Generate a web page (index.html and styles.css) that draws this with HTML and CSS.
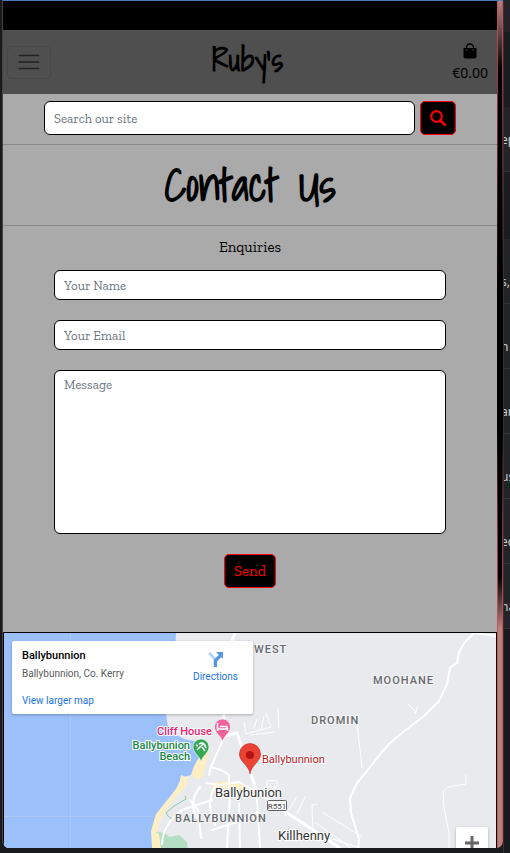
FILE: index.html
```html
<!DOCTYPE html>
<html lang="en">
<head>
<meta charset="utf-8">
<meta name="viewport" content="width=device-width, initial-scale=1">
<title>Ruby's - Contact Us</title>
<link rel="stylesheet" href="styles.css">
</head>
<body>
<div class="desktop">
  <div class="window">
    <div class="page">
      <div class="banner"></div>
      <header class="navbar">
        <button class="toggler" type="button" aria-label="Toggle navigation">
          <svg width="26" height="26" viewBox="0 0 30 30"><path d="M4 7.500h22M4 15h22M4 22.500h22" stroke="#222" stroke-width="2" stroke-linecap="round"/></svg>
        </button>
        <a class="brand" href="#">Ruby's</a>
        <a class="bag" href="#">
          <svg width="14" height="16" viewBox="0 0 14 16"><path d="M3.500 6V4.500a3.500 3.500 0 0 1 7 0V6" fill="none" stroke="#000" stroke-width="1.500"/><path d="M.5 5h13v8.500a2 2 0 0 1-2 2h-9a2 2 0 0 1-2-2z"/><circle cx="3.800" cy="7" r=".7" fill="#555"/><circle cx="10.200" cy="7" r=".7" fill="#555"/></svg>
          <span>€0.00</span>
        </a>
      </header>
      <form class="search">
        <input class="field" type="text" placeholder="Search our site" aria-label="Search our site">
        <button class="btn" type="button" aria-label="Search">
          <svg width="16" height="16" viewBox="0 0 16 16"><circle cx="6.500" cy="6.500" r="5.300" fill="none" stroke="red" stroke-width="2.200"/><path d="M10.500 10.500L15 15" stroke="red" stroke-width="2.600" stroke-linecap="round"/></svg>
        </button>
      </form>
      <h1 class="title">Contact Us</h1>
      <form class="contact">
        <h2 class="subtitle">Enquiries</h2>
        <input class="field" type="text" placeholder="Your Name" aria-label="Your Name">
        <input class="field" type="email" placeholder="Your Email" aria-label="Your Email">
        <textarea class="field message" placeholder="Message" aria-label="Message"></textarea>
        <button class="btn" type="button">Send</button>
      </form>
      <section class="map" aria-label="Map of Ballybunnion">
        <svg class="terrain" viewBox="4 633 492 215" preserveAspectRatio="xMinYMin slice">
          <path fill="#e8eaed" d="M4 633h492v215H4z"/>
          <path fill="#9cc0fa" d="M4 633H176L175 650 166 714 168 727 175 734 184 739 198 742 203 755 194 774 181 778 176 789 161 808 154 822 153 848H4z"/>
          <path fill="#fdefc3" d="M204 749l5 3-4 16-3 10-6 1-5-4 3-9zM181 775l7 3-1 7-13 14-10 14-5 10-2 10 1 15h-6l-1-17 5-17 14-17 9-12zM212 783l14-2 22 5-1 4-35-3z"/>
          <path fill="#b4dec4" d="M155 832l11 1 3 4 10-2 8 7 1 6h-28z"/>
          <path fill="#fdefc3" d="M153 831l6 3 2 14h-8z"/>
          <g fill="none" stroke="#b5cdf5" opacity=".6"><path d="M70.500 633v215M4 816.500h150"/></g>
          <g fill="none" stroke="#fff" stroke-linecap="round" stroke-linejoin="round">
            <path stroke-width="3" d="M235 633l-5 13-7 80 1 10 13-3 7 20 8 24 4 13 25 19 34 22 26 18"/>
            <path stroke-width="2" d="M223 740l-6 13-6 14 10 3 8 5v19M211 767l-2 8M206 783l15 2 18-3 18 10M200 787q-12 14-3 31M215 787q-10 15 0 38M162 844q1-20 20-34l30-10M190 800l8 10 3 28M212 830l28-9 20-10M230 795l-3 53M239 803l1 45M257 800l3 48"/>
            <path stroke-width="2" d="M496 636l-22-3-9 9-6 10-2 11-7 5-3 16-8 17-15 15-22 17-13 11-8 9-14 18-10 12-7 15 1 15 8 26-1 16"/>
            <path d="M357 723l5 45M408 704l6 6 1 4 3-8M466 775v9l-18 3-5 5 1 15 5 26v15M296 798l-11 18M305 797l-8 17M317 804l-5 1 1 29M314 833l46 15M322 812l40 25M267 781v6h10v-6zM316 823l35 25M244 722l2 12 25-7-5-14M251 735l24-3M257 719l-3 9M264 716l-3 13M278 708l1 20"/>
          </g>
          <path fill="none" stroke="#8cc8a0" d="M185 796l1 3-12 7-8 7 2 3 4 3"/>
          <g class="labels">
            <text class="area" x="254" y="653">WEST</text>
            <text class="area" x="373" y="684">MOOHANE</text>
            <text class="area" x="311" y="724">DROMIN</text>
            <text class="area" x="175" y="822">BALLYBUNNION</text>
            <text class="hotel" x="157" y="735">Cliff House</text>
            <text class="beach" x="190" y="749" text-anchor="end">Ballybunion</text>
            <text class="beach" x="190" y="760" text-anchor="end">Beach</text>
            <text class="place" x="262" y="763">Ballybunnion</text>
            <text class="town" x="215" y="797">Ballybunion</text>
            <text class="town" x="278" y="840">Killhenny</text>
          </g>
          <rect x="267.500" y="800.500" width="19" height="10" rx="1" fill="#fff" stroke="#5f6368"/>
          <text class="road" x="277" y="809" text-anchor="middle">R551</text>
          <path fill="#f0629a" stroke="#fff" stroke-width=".6" d="M222.500 742c-1-6-8-9-8-15a8 8 0 0 1 16 0c0 6-7 9-8 15z"/>
          <path fill="none" stroke="#fff" stroke-width="1.600" d="M217.500 723v8M217.500 729h10v2M220 726.500h7v3"/>
          <path fill="#34a853" stroke="#fff" stroke-width=".6" d="M201 762c-1-6-8-9-8-15a8 8 0 0 1 16 0c0 6-7 9-8 15z"/>
          <path fill="none" stroke="#fff" stroke-width="1.500" d="M197 750l7-7M199 744q5-3 7 4M202 747l3 4M196 745l2 1"/>
          <path fill="#ea4335" stroke="#c5221f" stroke-width=".6" d="M250 774c-1-9-10.500-12-10.500-20a10.500 10.500 0 0 1 21 0c0 8-9.500 11-10.500 20z"/>
          <circle cx="250" cy="755" r="4" fill="#b31412"/>
        </svg>
        <div class="card">
          <div class="details">
            <strong class="name">Ballybunnion</strong>
            <span class="address">Ballybunnion, Co. Kerry</span>
            <a class="larger" href="#">View larger map</a>
          </div>
          <a class="directions" href="#">
            <svg width="16" height="16" viewBox="0 0 16 16"><path d="M1 2l6 6v7" fill="none" stroke="#b5d2f7" stroke-width="3"/><path d="M7.500 16V9.500l5-5" fill="none" stroke="#5796e6" stroke-width="3.200"/><path fill="#5796e6" d="M8 1h7v7z"/></svg>
            <span>Directions</span>
          </a>
        </div>
        <button class="zoom" type="button" aria-label="Zoom in">
          <svg width="14" height="14" viewBox="0 0 14 14"><path d="M7 0v14M0 7h14" stroke="#666" stroke-width="3"/></svg>
        </button>
      </section>
    </div>
    <div class="scrollbar"><div class="thumb"></div></div>
  </div>
  <aside class="behind">
    <div class="strip light short"></div>
    <div class="strip dark tall"></div>
    <div class="strip light entry bold">ep</div>
    <div class="strip dark gap"></div>
    <div class="strip light entry">s,</div>
    <div class="strip light entry">n</div>
    <div class="strip light entry">ar</div>
    <div class="strip light entry">us</div>
    <div class="strip light entry">ed</div>
    <div class="strip light entry">ha</div>
  </aside>
</div>
</body>
</html>
```
FILE: styles.css
```css
* { box-sizing: border-box; }

body {
  margin: 0;
  background: #191a1d;
  color: #000;
  font-family: "Zilla Slab", "DejaVu Serif Condensed", "DejaVu Serif", serif;
}

a { color: inherit; text-decoration: none; }

.desktop {
  display: grid;
  grid-template-columns: 1fr 7px;
  height: 100vh;
  min-height: 760px;
  overflow: hidden;
}

.window {
  display: grid;
  grid-template-columns: 1fr 6px;
  margin: 0 0 5px 2px;
  border-top: 1px solid #4a7ab5;
  border-left: 1px solid #444;
  border-radius: 0 0 7px 7px;
  overflow: hidden;
}

.page {
  display: flex;
  flex-direction: column;
  min-width: 0;
  min-height: 0;
  background: #aaa;
}

.banner { height: 29px; flex: none; background: #000; }

.navbar {
  display: grid;
  grid-template-columns: 1fr auto 1fr;
  align-items: center;
  flex: none;
  height: 64px;
  padding: 0 9px 0 4px;
  background: #4f4f4f;
}

.toggler {
  display: flex;
  align-items: center;
  justify-content: center;
  width: 44px;
  height: 33px;
  padding: 0;
  background: none;
  border: 1px solid #464646;
  border-radius: 5px;
}

.brand, .title {
  font-family: "Shadows Into Light", "Liberation Sans Narrow", "DejaVu Sans Condensed", cursive;
  font-weight: 700;
}

.brand { padding-bottom: 6px; font-size: 32px; line-height: 52px; }

.bag {
  display: flex;
  flex-direction: column;
  align-items: center;
  justify-self: end;
  gap: 3px;
  padding-top: 3px;
  font: 14px/22px "Noto Sans", sans-serif;
}

.search {
  display: flex;
  gap: 5px;
  flex: none;
  height: 51px;
  padding: 7px 41px 9px;
  border-bottom: 1px solid #888;
}

.field {
  width: 100%;
  height: 30px;
  padding: 0 9px;
  background: #fff;
  border: 1px solid #000;
  border-radius: 6px;
  font-family: inherit;
  font-size: 13px;
  line-height: 16px;
}

.field::placeholder { color: #6c757d; opacity: 1; }

.search .field { height: 34px; flex: 1; min-width: 0; }

.btn {
  display: flex;
  align-items: center;
  justify-content: center;
  height: 34px;
  padding: 0 9px;
  background: #000;
  border: 1px solid red;
  border-radius: 5px;
  color: red;
  font-family: inherit;
  font-size: 15px;
  line-height: 20px;
}

.title {
  flex: none;
  margin: 0;
  height: 81px;
  border-bottom: 1px solid #888;
  font-size: 45px;
  line-height: 78px;
  text-align: center;
}

.contact {
  display: flex;
  flex-direction: column;
  align-items: center;
  flex: none;
  gap: 20px;
  padding: 11px 51px 44px;
}

.subtitle {
  margin: 0 0 -7px;
  font-size: 15px;
  font-weight: 400;
  line-height: 20px;
}

.message { display: block; height: 164px; padding: 6px 9px; resize: none; }

.map {
  position: relative;
  flex: 1;
  min-height: 0;
  border: 1px solid #000;
  border-bottom: 0;
  overflow: hidden;
  font-family: Roboto, sans-serif;
}

.terrain { display: block; width: 100%; height: 100%; }

.labels text { stroke: #fff; stroke-width: 2px; paint-order: stroke; stroke-linejoin: round; }
.labels .area { font-size: 11px; font-weight: 500; letter-spacing: 1px; fill: #666a6e; stroke: #f4f5f6; }
.labels .hotel { font-size: 11px; font-weight: 500; fill: #e91e72; }
.labels .beach { font-size: 11px; font-weight: 500; fill: #188545; }
.labels .place { font-size: 11px; fill: #b8201c; }
.labels .town { font-size: 13px; fill: #333; }
.road { font-size: 8px; fill: #444; }

.card {
  position: absolute;
  top: 8px;
  left: 8px;
  display: flex;
  justify-content: space-between;
  width: 241px;
  height: 73px;
  padding: 8px 15px 8px 10px;
  background: #fff;
  border-radius: 2px;
  box-shadow: 0 1px 3px #0004;
}

.details { display: flex; flex-direction: column; font-size: 10px; line-height: 14px; }
.name { font-size: 11px; font-weight: 500; }
.address { margin-top: 4px; color: #5b5b5b; }
.larger { margin-top: auto; line-height: 10px; color: #1a73e8; }

.directions {
  display: flex;
  flex-direction: column;
  align-items: center;
  gap: 3px;
  padding-top: 2px;
  color: #1a73e8;
  font-size: 10px;
  line-height: 14px;
}

.zoom {
  position: absolute;
  right: 8px;
  bottom: -11px;
  display: flex;
  align-items: center;
  justify-content: center;
  width: 32px;
  height: 32px;
  padding: 0;
  background: #fff;
  border: 0;
  border-radius: 2px;
  box-shadow: 0 1px 3px #0004;
}

.scrollbar {
  padding: 0 1px;
  background: linear-gradient(#c55 0, #833 12%, #000 35%, #000 50%, #833 62%, #c55 75%);
}

.thumb {
  height: 100%;
  background: linear-gradient(#b98080 0, #000 8%, #000 68%, #b98080 74%);
}

.behind {
  display: flex;
  flex-direction: column;
  overflow: hidden;
  border-left: 1px solid #333;
  color: #ccc;
  font: 12px/20px "Noto Sans", sans-serif;
}

.strip { flex: none; height: 65px; overflow: hidden; }
.light { background: #232428; }
.dark { background: #1a1c1f; }
.short { height: 32px; }
.tall { height: 75px; }
.gap { height: 67px; }
.entry { padding-top: 33px; border-bottom: 1px solid #34363a; text-indent: -3px; }
.bold { padding-top: 23px; }
```
